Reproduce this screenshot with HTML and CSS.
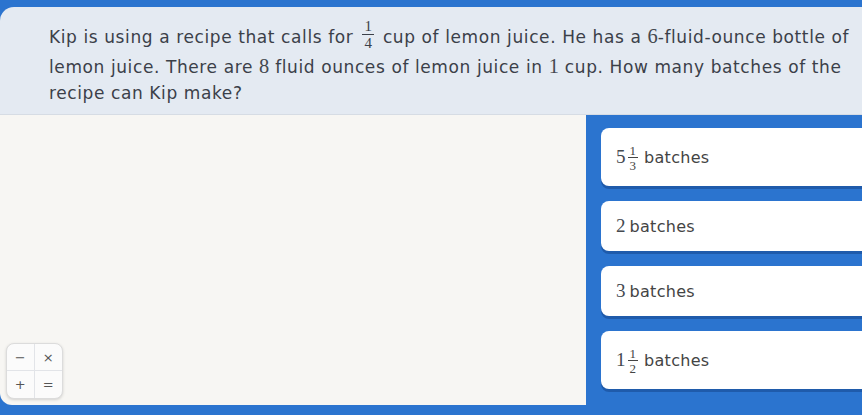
FILE: index.html
```html
<!DOCTYPE html>
<html>
<head>
<meta charset="utf-8">
<link rel="stylesheet" href="styles.css">
</head>
<body>
<div class="app">
  <div class="question">
    <p class="qtext">Kip is using a recipe that calls for <span class="frac"><span class="num">1</span><span class="den">4</span></span> cup of lemon juice. He has a <span class="m">6</span>-fluid-ounce bottle of lemon juice. There are <span class="m">8</span> fluid ounces of lemon juice in <span class="m">1</span> cup. How many batches of the recipe can Kip make?</p>
  </div>
  <div class="main">
    <div class="canvas">
      <div class="calc">
        <span class="key">&minus;</span>
        <span class="key">&times;</span>
        <span class="key">+</span>
        <span class="key">=</span>
      </div>
    </div>
    <div class="choices">
      <div class="card tall"><span class="m">5</span><span class="frac small"><span class="num">1</span><span class="den">3</span></span> batches</div>
      <div class="card"><span class="m">2</span> batches</div>
      <div class="card"><span class="m">3</span> batches</div>
      <div class="card tall"><span class="m">1</span><span class="frac small"><span class="num">1</span><span class="den">2</span></span> batches</div>
    </div>
  </div>
</div>
</body>
</html>
```
FILE: styles.css
```css
* { box-sizing: border-box; }
html, body { margin: 0; padding: 0; }
body {
  width: 862px;
  height: 415px;
  overflow: hidden;
  background: #2b74cf;
  font-family: "DejaVu Sans", "Open Sans", sans-serif;
}
.app {
  padding-top: 7px;
  height: 415px;
  display: flex;
  flex-direction: column;
}
.question {
  background: #e4eaf2;
  border-top-left-radius: 14px;
  height: 108px;
  padding: 16px 2px 0 49px;
  border-bottom: 1px solid #d6dce4;
  flex-shrink: 0;
}
.qtext {
  margin: 0;
  font-size: 17px;
  line-height: 26px;
  letter-spacing: 0.6px;
  color: #3b4049;
}
.m {
  font-family: "Liberation Serif", "DejaVu Serif", serif;
  font-size: 1.2em;
  letter-spacing: 0;
  color: #444950;
}
.frac {
  display: inline-flex;
  flex-direction: column;
  align-items: center;
  vertical-align: middle;
  font-family: "Liberation Serif", "DejaVu Serif", serif;
  font-size: 15px;
  line-height: 13px;
  letter-spacing: 0;
  margin: 0 3px;
  position: relative;
  top: -3px;
}
.frac .num {
  border-bottom: 1px solid #3b4049;
  padding: 0 2px 1px;
}
.frac .den { padding-top: 2px; }
.main {
  display: flex;
  height: 290px;
  flex-shrink: 0;
}
.canvas {
  width: 586px;
  flex-shrink: 0;
  background: #f7f6f3;
  border-bottom-left-radius: 12px;
  position: relative;
}
.calc {
  position: absolute;
  left: 6px;
  top: 228px;
  width: 57px;
  height: 56px;
  background: #fbfbfb;
  border: 1px solid #dcdcdc;
  border-radius: 8px;
  box-shadow: 0 1px 3px rgba(0,0,0,0.15);
  display: grid;
  grid-template-columns: 1fr 1fr;
  grid-template-rows: 1fr 1fr;
  overflow: hidden;
}
.key {
  display: flex;
  align-items: center;
  justify-content: center;
  font-size: 13px;
  color: #555;
  font-family: "DejaVu Sans", sans-serif;
}
.key:nth-child(1) { border-right: 1px solid #e2e4e8; border-bottom: 1px solid #e2e4e8; }
.key:nth-child(2) { border-bottom: 1px solid #e2e4e8; }
.key:nth-child(3) { border-right: 1px solid #e2e4e8; }
.choices {
  display: flex;
  flex-direction: column;
  gap: 15px;
  padding: 13px 0 0 15px;
  flex-shrink: 0;
}
.card {
  width: 280px;
  height: 50px;
  background: #fff;
  border-radius: 8px;
  box-shadow: 0 3px 0 #1f5bab;
  display: flex;
  align-items: center;
  padding-left: 15px;
  font-size: 16px;
  letter-spacing: 0.3px;
  color: #444;
  gap: 5px;
}
.card.tall { height: 58px; }
.card .m { font-size: 19px; margin-right: -1px; }
.card .frac { margin: 0 1px 0 -2px; font-size: 13px; line-height: 11px; top: 1px; }
.card .frac .num { border-bottom-color: #444; }
```
